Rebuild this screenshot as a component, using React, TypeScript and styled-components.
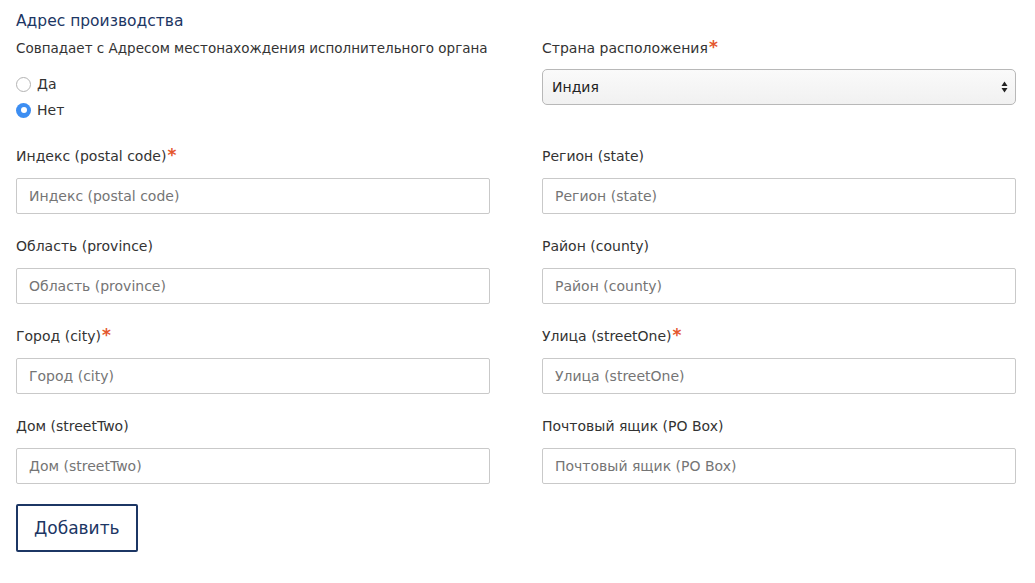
import styled, { createGlobalStyle } from "styled-components";

const GlobalStyle = createGlobalStyle`
  body {
    margin: 0;
    background: #fff;
    font-family: "DejaVu Sans", Verdana, sans-serif;
    color: #333;
  }
`;

type Field = { label: string; required?: boolean };

const rows: [Field, Field][] = [
  [{ label: "Индекс (postal code)", required: true }, { label: "Регион (state)" }],
  [{ label: "Область (province)" }, { label: "Район (county)" }],
  [{ label: "Город (city)", required: true }, { label: "Улица (streetOne)", required: true }],
  [{ label: "Дом (streetTwo)" }, { label: "Почтовый ящик (PO Box)" }],
];

const App = () => {
  return (
    <>
      <GlobalStyle />
      <Form>
        <Title>Адрес производства</Title>
        <Grid>
          <Column>
            <Label $size={13.5}>Совпадает с Адресом местонахождения исполнительного органа</Label>
            <RadioList>
              <RadioRow>
                <Radio $checked={false} />
                Да
              </RadioRow>
              <RadioRow>
                <Radio $checked />
                Нет
              </RadioRow>
            </RadioList>
          </Column>
          <Column>
            <Label>
              Страна расположения<Star>*</Star>
            </Label>
            <Select>
              <span>Индия</span>
              <svg width="7" height="12" viewBox="0 0 7 12">
                <path d="M3.5 0.5 L6.5 5 H0.5 Z" fill="#222" />
                <path d="M3.5 11.5 L6.5 7 H0.5 Z" fill="#222" />
              </svg>
            </Select>
          </Column>
          {rows.map((pair) =>
            pair.map((f) => (
              <FieldBox key={f.label}>
                <Label>
                  {f.label}
                  {f.required && <Star>*</Star>}
                </Label>
                <Input placeholder={f.label} />
              </FieldBox>
            ))
          )}
        </Grid>
        <Button>Добавить</Button>
      </Form>
    </>
  );
};
export default App;

const Form = styled.div`
  padding: 10px 16px 0 16px;
  width: 1000px;
`;
const Title = styled.h2`
  margin: 0;
  font-size: 15.5px;
  font-weight: 400;
  color: #1c3664;
  line-height: 22px;
`;
const Grid = styled.div`
  display: grid;
  grid-template-columns: 474px 474px;
  column-gap: 52px;
  row-gap: 22px;
  margin-top: 6px;
`;
const Column = styled.div`
  display: flex;
  flex-direction: column;
  height: 86px;
`;
const FieldBox = styled.div`
  display: flex;
  flex-direction: column;
`;
const Label = styled.div<{ $size?: number }>`
  font-size: ${(p) => p.$size ?? 14}px;
  line-height: 20px;
  color: #333;
  margin-bottom: 12px;
  white-space: nowrap;
`;
const Star = styled.span`
  color: #e4572e;
  font-weight: 700;
  font-size: 17px;
  line-height: 0;
  margin-left: 1px;
`;
const RadioList = styled.div`
  display: flex;
  flex-direction: column;
  gap: 6px;
  margin-top: 4px;
`;
const RadioRow = styled.label`
  display: flex;
  align-items: center;
  gap: 6px;
  font-size: 14px;
  line-height: 20px;
  color: #333;
`;
const Radio = styled.span<{ $checked: boolean }>`
  box-sizing: border-box;
  width: 15px;
  height: 15px;
  border-radius: 50%;
  background: ${(p) => (p.$checked ? "#3d8ef2" : "#fff")};
  border: ${(p) => (p.$checked ? "none" : "1px solid #b3b3b3")};
  display: flex;
  align-items: center;
  justify-content: center;
  &::after {
    content: "";
    display: ${(p) => (p.$checked ? "block" : "none")};
    width: 6px;
    height: 6px;
    border-radius: 50%;
    background: #fff;
  }
`;
const Select = styled.div`
  box-sizing: border-box;
  height: 36px;
  margin-top: -1px;
  border: 1px solid #b8b8b8;
  border-radius: 5px;
  background: linear-gradient(#fafafa, #f1f1f1);
  display: flex;
  align-items: center;
  justify-content: space-between;
  padding: 0 7px 0 9px;
  font-size: 14px;
  color: #222;
`;
const Input = styled.input`
  box-sizing: border-box;
  height: 36px;
  width: 100%;
  border: 1px solid #c9c9c9;
  border-radius: 2px;
  padding: 0 12px;
  font-family: "DejaVu Sans", Verdana, sans-serif;
  font-size: 14px;
  color: #333;
  outline: none;
  &::placeholder {
    color: #757575;
  }
`;
const Button = styled.button`
  margin-top: 20px;
  height: 48px;
  padding: 0 16px;
  background: #fff;
  border: 2px solid #1c3664;
  border-radius: 2px;
  font-family: "DejaVu Sans", Verdana, sans-serif;
  font-size: 17px;
  color: #1c3664;
`;
